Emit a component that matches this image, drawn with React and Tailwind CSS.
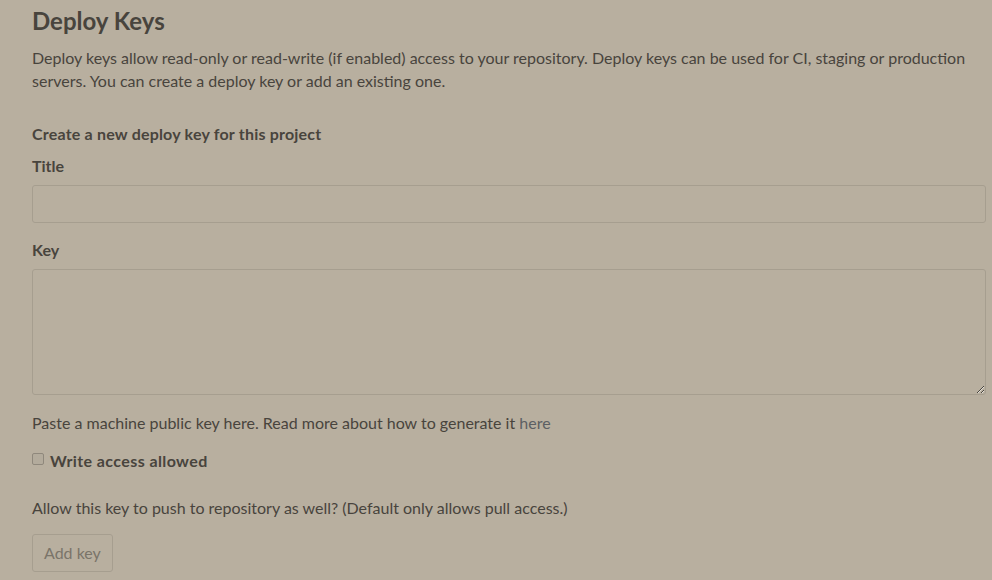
import React from 'react';

// Deploy keys settings form (dimmed page)
export default function App() {
    return (
        <div
            className="min-h-[580px] w-full bg-[#b8af9f] text-[#48443d] pl-8 pr-[6px] overflow-hidden"
            style={{ fontFamily: 'Lato, "Open Sans", sans-serif' }}
        >
            <h2 className="text-[24px] font-bold leading-[30px] pt-[6px] text-[#48443d]">Deploy Keys</h2>
            <p className="text-[16px] leading-[23px] mt-[10px]">
                Deploy keys allow read-only or read-write (if enabled) access to your repository. Deploy keys can be used for CI, staging or production servers. You can create a deploy key or add an existing one.
            </p>

            <form className="mt-[32px]" onSubmit={(e) => e.preventDefault()}>
                <h4 className="text-[16px] font-bold leading-[20px] tracking-[0.2px]">Create a new deploy key for this project</h4>

                <label className="block text-[16px] font-bold leading-[20px] mt-[12px]">Title</label>
                <input
                    type="text"
                    className="block w-full h-[38px] mt-[9px] rounded-[3px] border border-[#a69e8f] bg-transparent outline-none"
                />

                <label className="block text-[16px] font-bold leading-[20px] mt-[17px]">Key</label>
                <textarea
                    className="block w-full h-[126px] mt-[9px] rounded-[3px] border border-[#a69e8f] bg-transparent outline-none"
                />

                <p className="text-[16px] leading-[20px] mt-[18px]">
                    Paste a machine public key here. Read more about how to generate it{' '}
                    <a className="text-[#5c5f63]" href="#">here</a>
                </p>

                <div className="flex items-start gap-[6px] mt-[18px]">
                    <span className="mt-[2px] w-[12px] h-[12px] rounded-[2px] border border-[#8f887c] bg-[#b3ab9c]" />
                    <span className="text-[16px] font-bold leading-[20px] tracking-[0.4px]">Write access allowed</span>
                </div>

                <p className="text-[16px] leading-[20px] mt-[27px]">
                    Allow this key to push to repository as well? (Default only allows pull access.)
                </p>

                <button
                    type="submit"
                    className="mt-[16px] h-[38px] px-[11px] rounded-[3px] border border-[#a69e8f] text-[16px] text-[#7a7469]"
                >
                    Add key
                </button>
            </form>
        </div>
    );
}
